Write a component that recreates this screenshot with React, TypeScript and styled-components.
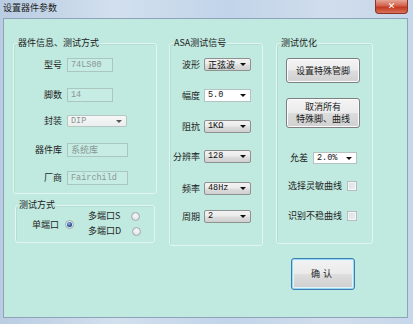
import React from 'react';
import styled, { createGlobalStyle, css } from 'styled-components';

const MINT = '#c0e9df';
const CJK = `"Noto Sans CJK SC", "Liberation Sans", sans-serif`;
const MONO = `"Liberation Mono", "DejaVu Sans Mono", monospace`;

const Global = createGlobalStyle`
  html, body { margin: 0; padding: 0; background: #ffffff; }
  body { font-family: ${CJK}; }
  * { box-sizing: border-box; }
`;

const Window = styled.div`
  width: 413px;
  height: 324px;
  display: flex;
  flex-direction: column;
  overflow: hidden;
  background: linear-gradient(90deg, #b9cce2 0%, #d2e0ee 28%, #c1d4e9 55%, #d0ddec 80%, #c6d7ea 100%);
`;

const TitleBar = styled.div`
  height: 18px;
  flex: none;
  display: flex;
  align-items: flex-start;
  justify-content: space-between;
  padding: 0 5px 0 3px;
`;

const Title = styled.div`
  font-size: 9px;
  line-height: 16px;
  color: #1b1b1b;
`;

const CloseButton = styled.div`
  width: 33px;
  height: 14px;
  display: flex;
  align-items: center;
  justify-content: center;
  border: 1px solid #8c3326;
  border-top: none;
  border-radius: 0 0 4px 4px;
  background: linear-gradient(180deg, #e6a596 0%, #d1614b 45%, #c2381f 55%, #d9735c 100%);
  color: #ffffff;
  font-family: "DejaVu Sans", sans-serif;
  font-weight: bold;
  font-size: 9px;
  line-height: 1;
`;

const Client = styled.div`
  flex: 1;
  margin: 0 5px 6px 3px;
  background: ${MINT};
  border: 1px solid #8ea3ba;
  display: flex;
  align-items: flex-start;
  padding: 24px 0 0 9px;
`;

const Column = styled.div<{ $w: number; $ml?: number }>`
  width: ${(p) => p.$w}px;
  margin-left: ${(p) => p.$ml ?? 0}px;
  display: flex;
  flex-direction: column;
  align-items: flex-start;
`;

const GroupBox = styled.div<{ $w: number; $h: number; $mt?: number; $ml?: number }>`
  width: ${(p) => p.$w}px;
  height: ${(p) => p.$h}px;
  margin-top: ${(p) => p.$mt ?? 0}px;
  margin-left: ${(p) => p.$ml ?? 0}px;
  border: 1px solid #e2f5f0;
  border-radius: 3px;
  box-shadow: inset 1px 1px 0 #b3dcd2;
  display: flex;
  flex-direction: column;
`;

const Legend = styled.div<{ $ml?: number }>`
  margin: -7px 0 0 ${(p) => p.$ml ?? 3}px;
  width: max-content;
  padding: 0 1px;
  background: ${MINT};
  font-size: 9px;
  line-height: 12px;
  color: #1c1c1c;
`;

const FieldRow = styled.div<{ $mt: number; $ml?: number; $label: number; $gap: number; $h: number }>`
  display: grid;
  grid-template-columns: ${(p) => p.$label}px auto;
  column-gap: ${(p) => p.$gap}px;
  align-items: center;
  height: ${(p) => p.$h}px;
  margin-top: ${(p) => p.$mt}px;
  margin-left: ${(p) => p.$ml ?? 0}px;
`;

const Label = styled.span`
  font-size: 9px;
  line-height: 12px;
  color: #1e1e1e;
  text-align: right;
  white-space: nowrap;
`;

const TextBox = styled.div<{ $w: number }>`
  width: ${(p) => p.$w}px;
  height: 14px;
  border: 1px solid #aac7bf;
  background: #c6ece3;
  color: #889894;
  font-family: ${MONO};
  font-size: 8.5px;
  line-height: 12px;
  padding-left: 3px;
  white-space: nowrap;
  overflow: hidden;
`;

const TextBoxCjk = styled(TextBox)`
  font-family: ${CJK};
  font-size: 9px;
`;

type ComboKind = 'gray' | 'white' | 'disabled';

const ComboBox = styled.div<{ $w: number; $h: number; $kind: ComboKind }>`
  width: ${(p) => p.$w}px;
  height: ${(p) => p.$h}px;
  display: flex;
  align-items: center;
  padding: 0 4px 0 3px;
  border-radius: 2px;
  white-space: nowrap;
  ${(p) =>
    p.$kind === 'gray' &&
    css`
      border: 1px solid #8f9090;
      background: linear-gradient(180deg, #f3f3f3 0%, #ebebeb 45%, #dddddd 55%, #cfcfcf 100%);
      color: #111;
    `}
  ${(p) =>
    p.$kind === 'white' &&
    css`
      border: 1px solid #b4c2c4;
      border-radius: 0;
      background: #ffffff;
      color: #111;
    `}
  ${(p) =>
    p.$kind === 'disabled' &&
    css`
      border: 1px solid #b6c6c2;
      background: linear-gradient(180deg, #f6f8f8 0%, #eceeee 100%);
      color: #889492;
    `}
`;

const ComboValue = styled.span<{ $cjk?: boolean }>`
  font-family: ${(p) => (p.$cjk ? CJK : MONO)};
  font-size: ${(p) => (p.$cjk ? 9 : 8.5)}px;
  line-height: 11px;
`;

const Arrow = styled.span<{ $dim?: boolean }>`
  margin-left: auto;
  width: 0;
  height: 0;
  border-left: 3px solid transparent;
  border-right: 3px solid transparent;
  border-top: 3px solid ${(p) => (p.$dim ? '#555' : '#111')};
`;

const ModeBody = styled.div`
  display: flex;
  align-items: center;
  padding: 0 0 0 16px;
  height: 27px;
`;

const Option = styled.div<{ $gap: number }>`
  display: flex;
  align-items: center;
  gap: ${(p) => p.$gap}px;
  font-size: 9px;
  line-height: 12px;
  color: #1e1e1e;
  white-space: nowrap;
`;

const OptionStack = styled.div`
  display: flex;
  flex-direction: column;
  gap: 3px;
  margin-left: 14px;
  margin-top: -2px;
`;

const Radio = styled.span<{ $on?: boolean }>`
  width: 9px;
  height: 9px;
  border-radius: 50%;
  border: 1px solid #a3acb2;
  background: radial-gradient(circle at 50% 40%, #fafafa 0%, #e2e4e6 60%, #cfd3d6 100%);
  display: flex;
  align-items: center;
  justify-content: center;
  &::after {
    content: '';
    display: ${(p) => (p.$on ? 'block' : 'none')};
    width: 5px;
    height: 5px;
    border-radius: 50%;
    background: radial-gradient(circle at 40% 35%, #8fbbe6 0%, #2a5f9f 50%, #0f2f5e 100%);
  }
`;

const PushButton = styled.div<{ $w: number; $h: number; $mt?: number; $ml?: number }>`
  width: ${(p) => p.$w}px;
  height: ${(p) => p.$h}px;
  margin-top: ${(p) => p.$mt ?? 0}px;
  margin-left: ${(p) => p.$ml ?? 0}px;
  display: flex;
  flex-direction: column;
  align-items: center;
  justify-content: center;
  text-align: center;
  border: 1px solid #7d7f80;
  border-radius: 3px;
  background: linear-gradient(180deg, #f4f4f4 0%, #ebebeb 48%, #dcdcdc 52%, #d0d0d0 100%);
  box-shadow: inset 0 0 0 1px #fbfbfb;
  font-size: 9px;
  line-height: 12px;
  color: #1b1b1b;
`;

const DefaultButton = styled(PushButton)`
  border: 1px solid #3b7eb0;
  box-shadow: inset 0 0 0 1px #9bd6f3, inset 0 0 0 2px #e3f4fb;
  background: linear-gradient(180deg, #f2f2f2 0%, #ebebeb 48%, #dddddd 52%, #cfcfcf 100%);
  letter-spacing: 3px;
`;

const CheckRow = styled.div<{ $mt: number }>`
  display: flex;
  align-items: center;
  gap: 5px;
  height: 12px;
  margin-top: ${(p) => p.$mt}px;
  margin-left: 11px;
  font-size: 9px;
  line-height: 12px;
  color: #1e1e1e;
  white-space: nowrap;
`;

const CheckBox = styled.span`
  width: 10px;
  height: 10px;
  border: 1px solid #b4bcbf;
  background: linear-gradient(135deg, #dcdfe0 0%, #eef0f0 100%);
  box-shadow: inset 0 0 0 1px #f4f6f6;
`;

const InfoRow: React.FC<{ mt: number; label: string; children: React.ReactNode }> = ({ mt, label, children }) => (
  <FieldRow $mt={mt} $label={48} $gap={5} $h={14}>
    <Label>{label}</Label>
    {children}
  </FieldRow>
);

const signalRows: { label: string; value: string; kind: ComboKind; cjk?: boolean; mt: number }[] = [
  { label: '波形', value: '正弦波', kind: 'gray', cjk: true, mt: 9 },
  { label: '幅度', value: '5.0', kind: 'white', mt: 18 },
  { label: '阻抗', value: '1KΩ', kind: 'gray', mt: 18 },
  { label: '分辨率', value: '128', kind: 'gray', mt: 17 },
  { label: '频率', value: '48Hz', kind: 'gray', mt: 19 },
  { label: '周期', value: '2', kind: 'gray', mt: 15 },
];

export default function App() {
  return (
    <>
      <Global />
      <Window>
        <TitleBar>
          <Title>设置器件参数</Title>
          <CloseButton>✕</CloseButton>
        </TitleBar>
        <Client>
          <Column $w={144}>
            <GroupBox $w={144} $h={151}>
              <Legend $ml={3}>器件信息、测试方式</Legend>
              <InfoRow mt={9} label="型号">
                <TextBox $w={46}>74LS00</TextBox>
              </InfoRow>
              <InfoRow mt={16} label="脚数">
                <TextBox $w={46}>14</TextBox>
              </InfoRow>
              <InfoRow mt={12} label="封装">
                <ComboBox $w={60} $h={12} $kind="disabled">
                  <ComboValue>DIP</ComboValue>
                  <Arrow $dim />
                </ComboBox>
              </InfoRow>
              <InfoRow mt={15} label="器件库">
                <TextBoxCjk $w={61}>系统库</TextBoxCjk>
              </InfoRow>
              <InfoRow mt={14} label="厂商">
                <TextBox $w={61}>Fairchild</TextBox>
              </InfoRow>
            </GroupBox>
            <GroupBox $w={140} $h={38} $mt={11} $ml={2}>
              <Legend $ml={2}>测试方式</Legend>
              <ModeBody>
                <Option $gap={6}>
                  单端口
                  <Radio $on />
                </Option>
                <OptionStack>
                  <Option $gap={11}>
                    多端口S
                    <Radio />
                  </Option>
                  <Option $gap={11}>
                    多端口D
                    <Radio />
                  </Option>
                </OptionStack>
              </ModeBody>
            </GroupBox>
          </Column>

          <Column $w={94} $ml={12}>
            <GroupBox $w={94} $h={203}>
              <Legend $ml={3}>ASA测试信号</Legend>
              {signalRows.map((r) => (
                <FieldRow key={r.label} $mt={r.mt} $label={30} $gap={4} $h={13}>
                  <Label>{r.label}</Label>
                  <ComboBox $w={47} $h={13} $kind={r.kind}>
                    <ComboValue $cjk={r.cjk}>{r.value}</ComboValue>
                    <Arrow />
                  </ComboBox>
                </FieldRow>
              ))}
            </GroupBox>
          </Column>

          <Column $w={97} $ml={13}>
            <GroupBox $w={97} $h={201}>
              <Legend $ml={3}>测试优化</Legend>
              <PushButton $w={74} $h={25} $mt={9} $ml={9}>
                设置特殊管脚
              </PushButton>
              <PushButton $w={74} $h={30} $mt={15} $ml={9}>
                <span>取消所有</span>
                <span>特殊脚、曲线</span>
              </PushButton>
              <FieldRow $mt={24} $ml={13} $label={18} $gap={5} $h={12}>
                <Label>允差</Label>
                <ComboBox $w={44} $h={12} $kind="white">
                  <ComboValue>2.0%</ComboValue>
                  <Arrow />
                </ComboBox>
              </FieldRow>
              <CheckRow $mt={16}>
                选择灵敏曲线
                <CheckBox />
              </CheckRow>
              <CheckRow $mt={18}>
                识别不稳曲线
                <CheckBox />
              </CheckRow>
            </GroupBox>
            <DefaultButton $w={64} $h={32} $mt={14} $ml={15}>
              确认
            </DefaultButton>
          </Column>
        </Client>
      </Window>
    </>
  );
}
